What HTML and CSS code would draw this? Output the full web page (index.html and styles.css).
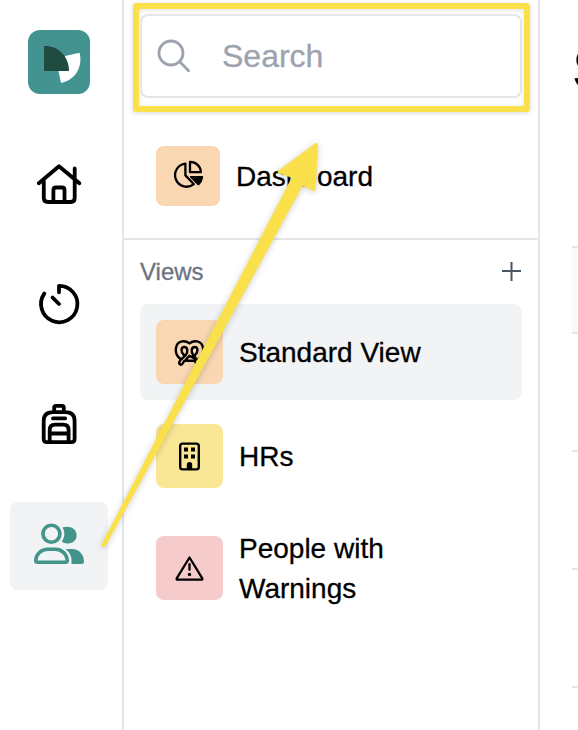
FILE: index.html
```html
<!DOCTYPE html>
<html lang="en">
<head>
<meta charset="utf-8">
<title>People</title>
<link rel="stylesheet" href="styles.css">
</head>
<body>
<div class="app">
  <nav class="rail">
    <svg class="logo" viewBox="28 30 62 64"><rect x="28" y="30" width="62" height="64" rx="12" fill="#439490"/><path d="M65 56L79.5 52.8C83 66 76 80 61 83L58.3 70Z" fill="#fff"/><path d="M44 46C58 45.5 69 56 69 71H44Z" fill="#204b40"/></svg>
    <a class="nav-item"><svg class="line" viewBox="10 142 98 88"><path d="M38.8 183.2L59 166.2L79.4 183.2M43.8 181V198Q43.8 202 48 202H70.5Q74.7 202 74.7 198V168.5M53.4 202V190Q53.4 187.5 56 187.5H62Q64.5 187.5 64.5 190V202"/></svg></a>
    <a class="nav-item"><svg class="line" viewBox="10 262 98 88"><path d="M59 292.3V285.8A18.2 18.2 0 1 1 44.3 293.6M52.5 297.5L59 304"/></svg></a>
    <a class="nav-item"><svg class="line" viewBox="10 382 98 88"><path d="M54.2 412V407.5Q54.2 405.8 56 405.8H62Q63.8 405.8 63.8 407.5V412M43.7 421Q43.7 412.2 53 412.2H65.5Q74.6 412.2 74.6 421V439Q74.6 442.2 71.5 442.2H47Q43.7 442.2 43.7 439ZM53 418.4H65.2M49.7 441V430Q49.7 424.6 55 424.6H63.5Q68.6 424.6 68.6 430V441M50 433.5H68.5"/></svg></a>
    <a class="nav-item active"><svg viewBox="10 502 98 88"><g fill="none" stroke="#43948a" stroke-width="3.6"><circle cx="51.4" cy="533.8" r="8.5"/><path d="M37.5 562.2H65.5Q67.2 562.2 67.2 560.8C67.2 553.5 61 549.3 55.5 549.3H47.5C41.5 549.3 35.8 554 35.8 560.8Q35.8 562.2 37.5 562.2Z"/></g><g fill="#43948a"><path d="M62.5 527.6C69 524.8 76.7 528.5 76.7 535.2C76.7 542.5 68 546 61.8 541.4C65 537 65.2 532 62.5 527.6Z"/><path d="M65.5 549H72C79 549 84 554.5 84 561.5Q84 564 81.5 564H71.5C72 557 70.5 553 65.5 549Z"/></g></svg></a>
  </nav>
  <aside class="panel">
    <div class="top">
      <div class="highlight">
        <label class="search"><svg viewBox="156 36 36 38"><g fill="none" stroke="#9ca3af" stroke-width="2.8" stroke-linecap="round"><circle cx="171" cy="52" r="12"/><path d="M180 61L188.6 69.8"/></g></svg><span>Search</span></label>
      </div>
      <a class="dashboard">
        <span class="tile orange"><svg viewBox="156 146 64 60"><path d="M185.4 163.6V175.4L193.9 184.2A11.6 11.6 0 1 1 185.4 163.6ZM190 161.9C196 161.9 200.8 166.5 200.8 172.2H190Z" fill="none" stroke="#000" stroke-width="2.3" stroke-linejoin="round"/><path d="M190.5 176H202.2Q203.4 176 203.2 177.2Q202.5 182 199.2 185Q198.4 185.6 197.6 184.9L190.2 177.4Q189.5 176 190.5 176Z"/></svg></span>
        <span class="label">Dashboard</span>
      </a>
    </div>
    <header class="views-head"><span>Views</span><svg viewBox="502 262 20 20"><path d="M502 271H521M511.5 261.5V281" stroke="#4b5563" stroke-width="2"/></svg></header>
    <div class="views">
      <a class="view selected">
        <span class="tile orange"><svg viewBox="156 320 67 64"><g fill="none" stroke="#000" stroke-width="2.4" stroke-linecap="round" stroke-linejoin="round"><path d="M180.6 359C173.5 354.5 174.5 342.5 182 341.4C186 340.8 188 342.2 189.5 343.4C191 342.2 193 340.8 197 341.4C204.5 342.5 205.5 354.5 198.4 359"/><path d="M184 355.2C180.3 351.5 181 347 184.3 347C187.8 347 188.2 351.5 185.8 355.2L180.2 360.4Q178.2 363 180 364.4Q181.6 365.3 183 363L184.3 360.8H194.7L196 363Q197.4 365.3 199 364.4Q200.8 363 198.8 360.4L189.5 355.8L186 359.5M195 355.2C198.7 351.5 198 347 194.7 347C191.2 347 190.8 351.5 193.2 355.2L196 358.5"/></g></svg></span>
        <span class="label">Standard View</span>
      </a>
      <a class="view">
        <span class="tile yellow"><svg viewBox="156 424 67 64"><rect x="180.2" y="443.6" width="18.6" height="25.8" rx="2.4" fill="none" stroke="#000" stroke-width="2.4"/><path d="M184 447.5H188V451.5H184ZM191 447.5H195V451.5H191ZM184 454.5H188V458.5H184ZM191 454.5H195V458.5H191ZM186.8 470V464.7Q186.8 462 189.5 462Q192.2 462 192.2 464.7V470Z"/></svg></span>
        <span class="label">HRs</span>
      </a>
      <a class="view">
        <span class="tile pink"><svg viewBox="156 536 67 64"><path d="M189.5 557.5L202.3 578.3Q202.7 579.7 201.4 579.7H177.6Q176.3 579.7 176.7 578.3ZM189.5 564.2V569.8" fill="none" stroke="#000" stroke-width="2.3" stroke-linecap="round" stroke-linejoin="round"/><circle cx="189.5" cy="574.5" r="1.7"/></svg></span>
        <span class="label">People with Warnings</span>
      </a>
    </div>
  </aside>
  <main class="content">
    <h1>S</h1>
    <div class="table"><div class="table-head"></div><div class="row"></div><div class="row"></div><div class="row"></div></div>
  </main>
  <svg class="arrow" viewBox="0 0 578 730"><path d="M102 543.5L291.6 177.8L279 173.2Q276.4 172 278.5 170.4L315 143.5Q318.2 142 318.1 145L315.5 189.5Q315.2 192 312.8 190.7L302.8 185.4L105.8 545.8Q104 548 102 546.6Q100.9 545.4 102 543.5Z" fill="#fae14b"/></svg>
</div>
</body>
</html>
```
FILE: styles.css
```css
* { box-sizing: border-box; }
body {
  margin: 0;
  background: #fff;
  color: #000;
  font: 28px/40px "Liberation Sans", Arial, sans-serif;
  -webkit-text-stroke: .3px currentColor;
}
svg { display: block; flex: none; }
.app {
  position: relative;
  display: flex;
  width: 578px;
  height: 730px;
  overflow: hidden;
}
.rail {
  flex: none;
  width: 124px;
  padding: 30px 0 0 10px;
  border-right: 2px solid #e5e5ea;
  display: flex;
  flex-direction: column;
  gap: 32px;
}
.logo { width: 62px; height: 64px; margin: 0 0 16px 18px; }
.nav-item { width: 98px; height: 88px; border-radius: 8px; }
.nav-item.active { background: #f2f3f5; }
.line {
  fill: none;
  stroke: #000;
  stroke-width: 3.8;
  stroke-linecap: round;
  stroke-linejoin: round;
}
.panel { flex: none; width: 416px; border-right: 2px solid #e5e5ea; }
.top {
  height: 240px;
  padding: 3px 8px 0 9px;
  border-bottom: 2px solid #e5e5ea;
}
.highlight {
  width: 397px;
  height: 109px;
  padding: 5px 2px 8px 1px;
  border: 6px solid #fae14b;
  border-radius: 3px;
  box-shadow: 0 1px 5px rgba(0, 0, 0, .16), inset 0 1px 5px rgba(0, 0, 0, .12);
}
.search {
  height: 84px;
  padding-left: 14px;
  display: flex;
  align-items: center;
  gap: 30px;
  border: 2px solid #e5e5ea;
  border-radius: 8px;
  background: #fff;
  color: #9ca3af;
  font-size: 32px;
}
.search svg { width: 36px; height: 38px; }
.dashboard {
  display: flex;
  align-items: center;
  gap: 16px;
  margin: 34px 0 0 23px;
}
.tile {
  flex: none;
  width: 67px;
  height: 64px;
  border-radius: 8px;
}
.label { padding-top: 1px; margin-bottom: -1px; }
.dashboard .tile { width: 64px; height: 60px; }
.orange { background: #f8d7b2; }
.yellow { background: #f9e796; }
.pink { background: #f5cccb; }
.views-head {
  height: 64px;
  padding: 0 16px;
  display: flex;
  align-items: center;
  justify-content: space-between;
  color: #6b7280;
  font-size: 24px;
}
.views-head svg { width: 20px; height: 20px; }
.views { display: grid; gap: 8px; padding: 0 16px; }
.view {
  display: flex;
  align-items: center;
  gap: 16px;
  padding: 16px;
  border-radius: 8px;
}
.view.selected { background: #f2f3f5; }
.content {
  flex: 1;
  min-width: 0;
  padding-left: 32px;
  overflow: hidden;
}
h1 { margin: 0; padding: 39px 0 0 1px; font-size: 58px; line-height: 60px; }
.table { margin-top: 147px; border-top: 2px solid #e5e5ea; }
.table-head { height: 86px; background: #f9fafb; border-bottom: 2px solid #e5e5ea; }
.row { height: 118px; border-bottom: 2px solid #e5e5ea; }
.arrow {
  position: absolute;
  inset: 0;
  width: 578px;
  height: 730px;
  pointer-events: none;
  filter: drop-shadow(0 1px 3px rgba(0, 0, 0, .2));
}
```
